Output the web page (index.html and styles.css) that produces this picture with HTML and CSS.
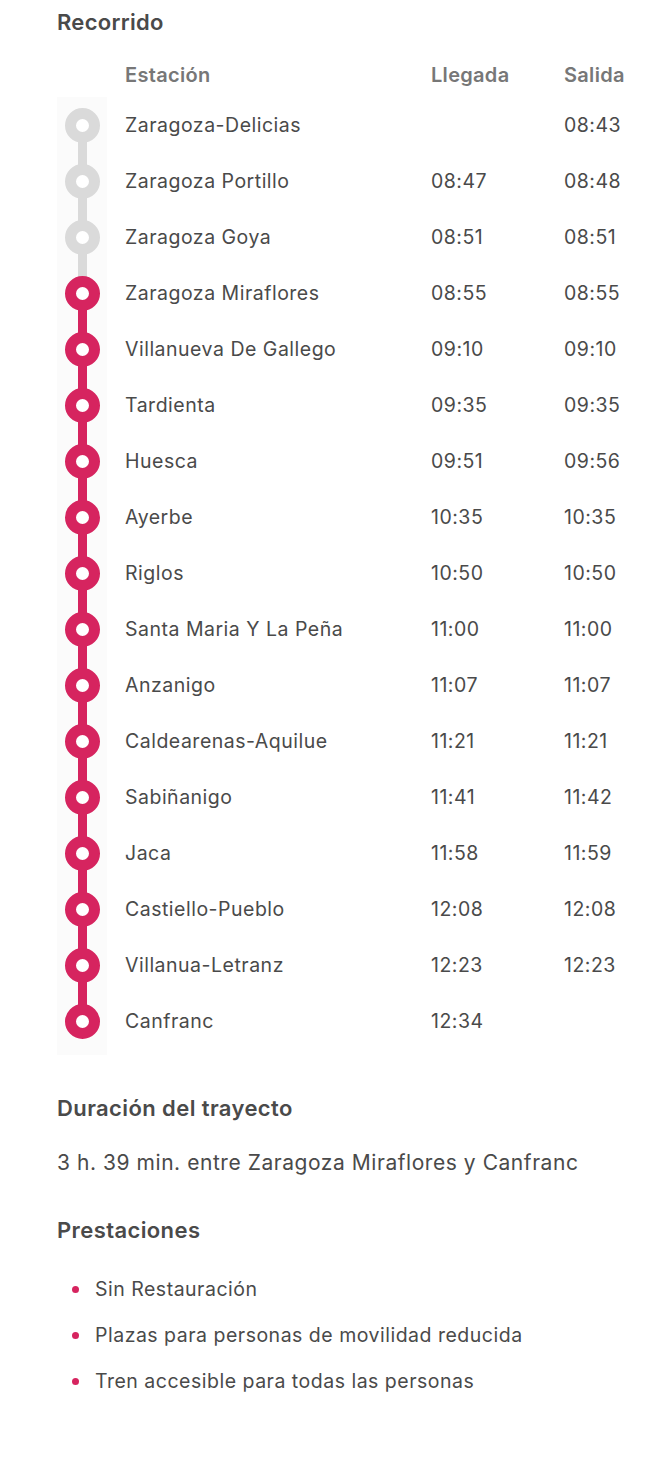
FILE: index.html
```html
<!DOCTYPE html>
<html lang="es">
<head>
<meta charset="utf-8">
<title>Recorrido</title>
<link rel="stylesheet" href="styles.css">
</head>
<body>
<main class="page">
  <h2 class="title">Recorrido</h2>
  <div class="route">
    <div class="row head">
      <div class="track-h"></div>
      <div class="c-st">Estación</div>
      <div class="c-ll">Llegada</div>
      <div class="c-sa">Salida</div>
    </div>
    <div class="stops">
      <div class="row gray first"><div class="track"><span class="dot"></span></div><div class="c-st">Zaragoza-Delicias</div><div class="c-ll"></div><div class="c-sa">08:43</div></div>
      <div class="row gray"><div class="track"><span class="dot"></span></div><div class="c-st">Zaragoza Portillo</div><div class="c-ll">08:47</div><div class="c-sa">08:48</div></div>
      <div class="row gray"><div class="track"><span class="dot"></span></div><div class="c-st">Zaragoza Goya</div><div class="c-ll">08:51</div><div class="c-sa">08:51</div></div>
      <div class="row on from-gray"><div class="track"><span class="dot"></span></div><div class="c-st">Zaragoza Miraflores</div><div class="c-ll">08:55</div><div class="c-sa">08:55</div></div>
      <div class="row on"><div class="track"><span class="dot"></span></div><div class="c-st">Villanueva De Gallego</div><div class="c-ll">09:10</div><div class="c-sa">09:10</div></div>
      <div class="row on"><div class="track"><span class="dot"></span></div><div class="c-st">Tardienta</div><div class="c-ll">09:35</div><div class="c-sa">09:35</div></div>
      <div class="row on"><div class="track"><span class="dot"></span></div><div class="c-st">Huesca</div><div class="c-ll">09:51</div><div class="c-sa">09:56</div></div>
      <div class="row on"><div class="track"><span class="dot"></span></div><div class="c-st">Ayerbe</div><div class="c-ll">10:35</div><div class="c-sa">10:35</div></div>
      <div class="row on"><div class="track"><span class="dot"></span></div><div class="c-st">Riglos</div><div class="c-ll">10:50</div><div class="c-sa">10:50</div></div>
      <div class="row on"><div class="track"><span class="dot"></span></div><div class="c-st">Santa Maria Y La Peña</div><div class="c-ll">11:00</div><div class="c-sa">11:00</div></div>
      <div class="row on"><div class="track"><span class="dot"></span></div><div class="c-st">Anzanigo</div><div class="c-ll">11:07</div><div class="c-sa">11:07</div></div>
      <div class="row on"><div class="track"><span class="dot"></span></div><div class="c-st">Caldearenas-Aquilue</div><div class="c-ll">11:21</div><div class="c-sa">11:21</div></div>
      <div class="row on"><div class="track"><span class="dot"></span></div><div class="c-st">Sabiñanigo</div><div class="c-ll">11:41</div><div class="c-sa">11:42</div></div>
      <div class="row on"><div class="track"><span class="dot"></span></div><div class="c-st">Jaca</div><div class="c-ll">11:58</div><div class="c-sa">11:59</div></div>
      <div class="row on"><div class="track"><span class="dot"></span></div><div class="c-st">Castiello-Pueblo</div><div class="c-ll">12:08</div><div class="c-sa">12:08</div></div>
      <div class="row on"><div class="track"><span class="dot"></span></div><div class="c-st">Villanua-Letranz</div><div class="c-ll">12:23</div><div class="c-sa">12:23</div></div>
      <div class="row on last"><div class="track"><span class="dot"></span></div><div class="c-st">Canfranc</div><div class="c-ll">12:34</div><div class="c-sa"></div></div>
    </div>
  </div>

  <h3 class="sub">Duración del trayecto</h3>
  <p class="dur">3 h. 39 min. entre Zaragoza Miraflores y Canfranc</p>

  <h3 class="sub sub-2">Prestaciones</h3>
  <ul class="feats">
    <li>Sin Restauración</li>
    <li>Plazas para personas de movilidad reducida</li>
    <li>Tren accesible para todas las personas</li>
  </ul>
</main>
</body>
</html>
```

FILE: styles.css
```css
* { box-sizing: border-box; }
html, body { margin: 0; padding: 0; background: #fff; }
body {
  font-family: "Inter", "Liberation Sans", sans-serif;
  color: #4a4a4a;
}
.page { padding: 0 0 60px 57px; }

.title {
  margin: 0;
  padding-top: 8px;
  height: 46px;
  font-size: 22px;
  font-weight: 600;
  line-height: 28px;
  color: #4a4a4a;
  letter-spacing: 0.3px;
}

.row {
  display: grid;
  grid-template-columns: 50px 18px 306px 133px 1fr;
  align-items: center;
}
.row > .track, .row > .track-h { grid-column: 1; }
.row > .c-st { grid-column: 3; }
.row > .c-ll { grid-column: 4; }
.row > .c-sa { grid-column: 5; }

.head {
  height: 51px;
  padding-top: 6px;
  font-size: 20px;
  font-weight: 600;
  color: #777;
  letter-spacing: 0.3px;
}
.stops .row {
  height: 56px;
  font-size: 19.5px;
  letter-spacing: 0.5px;
}
.stops {
  padding-bottom: 6px;
  background: linear-gradient(to right, #fbfbfb 0, #fbfbfb 50px, transparent 50px);
}

.track {
  position: relative;
  height: 56px;
}
.track::before, .track::after {
  content: "";
  position: absolute;
  left: 21px;
  width: 9px;
  height: 28px;
}
.track::before { top: 0; }
.track::after { bottom: 0; }
.gray .track::before, .gray .track::after { background: #dadada; }
.on .track::before, .on .track::after { background: #d6245f; }
.from-gray .track::before { background: #dadada; }
.first .track::before, .last .track::after { display: none; }

.dot {
  position: absolute;
  left: 8px;
  top: 11px;
  width: 35px;
  height: 35px;
  border-radius: 50%;
  z-index: 1;
  background: #fff;
}
.gray .dot { border: 11px solid #dadada; }
.on .dot { border: 11px solid #d6245f; }

.sub {
  margin: 0;
  font-size: 22px;
  font-weight: 600;
  line-height: 28px;
  letter-spacing: 0.4px;
  padding-top: 39px;
}
.dur {
  margin: 0;
  padding-top: 27px;
  font-size: 21px;
  line-height: 28px;
  letter-spacing: 0.55px;
}
.sub-2 { padding-top: 39px; }

.feats {
  list-style: none;
  margin: 0;
  padding: 31px 0 0 0;
}
.feats li {
  position: relative;
  padding-left: 38px;
  font-size: 19.5px;
  line-height: 28px;
  margin-bottom: 18px;
  letter-spacing: 0.5px;
}
.feats li::before {
  content: "";
  position: absolute;
  left: 15px;
  top: 11px;
  width: 7px;
  height: 7px;
  border-radius: 50%;
  background: #d6245f;
}
```
